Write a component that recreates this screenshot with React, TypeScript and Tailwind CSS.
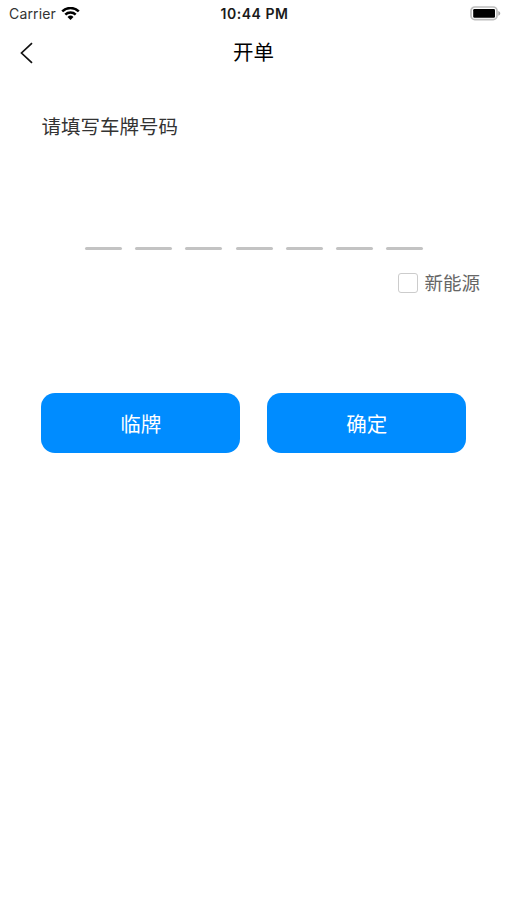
import { useState } from 'react';

const PLATE_LENGTH = 7;

function StatusBar() {
  return (
    <div className="grid h-[27px] grid-cols-3 items-center pl-[8px] pr-[6px] font-['Inter',sans-serif] text-[#1a1a1a]">
      <div className="flex items-center gap-[5px] pl-px">
        <span className="text-[14px] tracking-[0.15px] text-[#333]">Carrier</span>
        <svg width="19" height="14" viewBox="0 0 19 14" fill="none" stroke="#000" strokeWidth="2.5">
          <path d="M1.2 4.4a11.9 11.9 0 0 1 16.6 0" />
          <path d="M4.3 7.6a7.4 7.4 0 0 1 10.4 0" />
          <path d="M9.5 13.1 6.5 10a4.3 4.3 0 0 1 6 0z" fill="#000" stroke="none" />
        </svg>
      </div>
      <span className="whitespace-nowrap text-center text-[14px] font-semibold tracking-[0.5px]">10:44 PM</span>
      <div className="flex justify-end">
        <svg width="31" height="15" viewBox="0 0 31 15">
          <rect x="1" y="1" width="26" height="12.6" rx="3.8" fill="#fff" stroke="#bdbdbd" strokeWidth="1.7" />
          <rect x="3.2" y="3" width="21.8" height="8.8" rx="1.2" fill="#000" />
          <path d="M28.3 5c2.6 1 2.6 3.8 0 4.8z" fill="#a5a5a5" />
        </svg>
      </div>
    </div>
  );
}

export default function App() {
  const [newEnergy, setNewEnergy] = useState(false);

  return (
    <div className="min-h-screen bg-white font-['Noto_Sans_CJK_SC',sans-serif]">
      <StatusBar />

      {/* Header */}
      <div className="grid h-[50px] grid-cols-3 items-center px-5">
        <svg width="13" height="22" viewBox="0 0 13 22" fill="none" stroke="#111" strokeWidth="1.7" className="mt-0.5">
          <path d="M12 1.2 1.5 11 12 20.8" />
        </svg>
        <h1 className="pb-0.5 text-center text-[20.5px] font-normal leading-[30px] text-black">开单</h1>
      </div>

      <p className="ml-[41.5px] mt-[34px] text-[19.5px] leading-[30px] text-[#333]">请填写车牌号码</p>

      {/* Plate number slots */}
      <div className="ml-[85px] mt-[106px] flex gap-[13.2px]">
        {Array.from({ length: PLATE_LENGTH }, (_, i) => (
          <div key={i} className="h-[3px] w-[37px] rounded-sm bg-[#c3c3c3]" />
        ))}
      </div>

      <label className="mr-[27px] mt-[18px] flex h-[30px] items-center justify-end gap-[6.5px] text-[18.5px] text-[#666]">
        <input
          type="checkbox"
          checked={newEnergy}
          onChange={(e) => setNewEnergy(e.target.checked)}
          className="size-5 appearance-none rounded-[3px] border-[1.5px] border-[#cccccc] checked:bg-[#008cff]"
        />
        新能源
      </label>

      {/* Actions */}
      <div className="ml-[41.3px] mt-[95px] flex gap-[27px] text-[20.5px] text-white">
        <button className="h-[60px] w-[199px] rounded-[14px] bg-[#008cff]">临牌</button>
        <button className="h-[60px] w-[199px] rounded-[14px] bg-[#008cff]">确定</button>
      </div>
    </div>
  );
}
